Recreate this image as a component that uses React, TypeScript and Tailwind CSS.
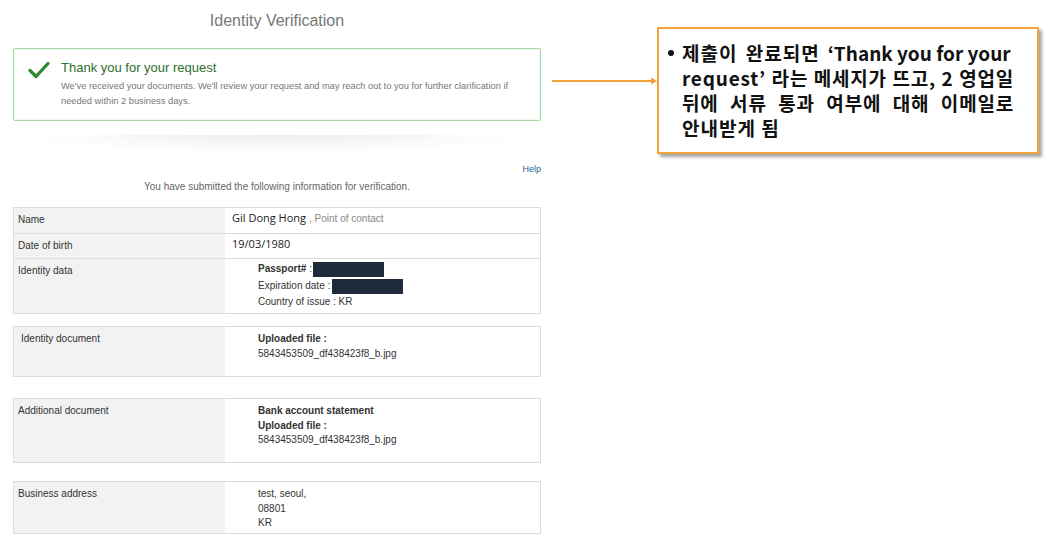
import React from 'react';

// --- Types ---
interface InfoRow {
  label: string;
  labelPad?: string;
  height: string;
  value: React.ReactNode;
}

const sans = "font-['Liberation_Sans',Arial,sans-serif]";

const Redacted: React.FC<{ w: string }> = ({ w }) => (
  <span className={`inline-block h-[15px] align-middle bg-[#1f2a3a] ${w}`} />
);

const InfoTable: React.FC<{ rows: InfoRow[]; className?: string }> = ({ rows, className }) => (
  <div className={`border border-[#dcdcdc] ${className ?? ''}`}>
    {rows.map((row, i) => (
      <div
        key={row.label}
        className={`grid grid-cols-[211px_1fr] ${row.height} ${i > 0 ? 'border-t border-[#dcdcdc]' : ''}`}
      >
        <div className={`bg-[#f2f2f2] ${row.labelPad ?? 'pl-[4px]'} pt-[5px] text-[10px] leading-[14px] text-[#333] ${sans}`}>
          {row.label}
        </div>
        <div className="bg-white">{row.value}</div>
      </div>
    ))}
  </div>
);

const valueText = `text-[10px] leading-[14.5px] text-[#333] ${sans}`;

// 콜아웃 줄: 마지막 줄 빼고 양쪽 정렬
const justifyLine = 'w-[332px] tracking-[0.8px] text-justify [text-align-last:justify]';

export default function App() {
  return (
    <div className={`w-[1051px] h-[554px] bg-white flex overflow-hidden ${sans}`}>
      {/* --- Left: verification page --- */}
      <div className="w-[541px] shrink-0 pl-[13px] flex flex-col">
        <h1 className="mt-[10px] text-center text-[16px] leading-[22px] text-[#777]">Identity Verification</h1>

        <div className="mt-[16px] h-[73px] border border-[#a6dba6] shadow-[inset_0_0_0_1px_#eef8ee] rounded-[2px] flex pl-[14px] pt-[11px]">
          <svg width="22" height="18" viewBox="0 0 22 18" className="mt-[1px] shrink-0">
            <path d="M2 9.5 L8 15.5 L20 2.5" fill="none" stroke="#2a8b2a" strokeWidth="3.2" strokeLinecap="round" strokeLinejoin="round" />
          </svg>
          <div className="ml-[11px]">
            <div className="text-[13px] leading-[16px] text-[#2d6e2d]">Thank you for your request</div>
            <div className="mt-[3px] text-[9.3px] leading-[15px] text-[#777]">
              We've received your documents. We'll review your request and may reach out to you for further clarification if
              <br />
              needed within 2 business days.
            </div>
          </div>
        </div>

        <div className="mt-[14px] mx-[6px] h-[18px] bg-[radial-gradient(ellipse_at_top,rgba(0,0,0,0.07),rgba(0,0,0,0)_70%)]" />

        <div className="mt-[10px] text-right text-[9px] leading-[12px] text-[#2a6496]">Help</div>
        <div className="mt-[5px] text-center text-[10px] leading-[13px] text-[#666]">
          You have submitted the following information for verification.
        </div>

        <InfoTable
          className="mt-[14px]"
          rows={[
            {
              label: 'Name',
              height: 'h-[25px]',
              value: (
                <div className="pl-[7px] pt-[2px] flex items-baseline">
                  <span className="font-['Open_Sans',sans-serif] text-[11px] text-[#222]">Gil Dong Hong</span>
                  <span className="ml-[3px] text-[10px] text-[#888]">, Point of contact</span>
                </div>
              ),
            },
            {
              label: 'Date of birth',
              height: 'h-[25px]',
              value: <div className="pl-[7px] pt-[2px] font-['Open_Sans',sans-serif] text-[11px] text-[#222]">19/03/1980</div>,
            },
            {
              label: 'Identity data',
              height: 'h-[55px]',
              value: (
                <div className={`pl-[33px] pt-[1px] ${valueText}`}>
                  <div className="h-[18px] flex items-center">
                    <span className="font-bold">Passport#</span>
                    <span className="ml-[3px] mr-[1px]">:</span>
                    <Redacted w="w-[71px]" />
                  </div>
                  <div className="h-[17px] flex items-center">
                    <span>Expiration date</span>
                    <span className="ml-[3px] mr-[1px]">:</span>
                    <Redacted w="w-[71px]" />
                  </div>
                  <div>Country of issue : KR</div>
                </div>
              ),
            },
          ]}
        />

        <InfoTable
          className="mt-[12px]"
          rows={[
            {
              label: 'Identity document',
              labelPad: 'pl-[7px]',
              height: 'h-[49px]',
              value: (
                <div className={`pl-[33px] pt-[5px] ${valueText}`}>
                  <div className="font-bold">Uploaded file :</div>
                  <div>5843453509_df438423f8_b.jpg</div>
                </div>
              ),
            },
          ]}
        />

        <InfoTable
          className="mt-[21px]"
          rows={[
            {
              label: 'Additional document',
              height: 'h-[63px]',
              value: (
                <div className={`pl-[33px] pt-[5px] ${valueText}`}>
                  <div className="font-bold">Bank account statement</div>
                  <div className="font-bold">Uploaded file :</div>
                  <div>5843453509_df438423f8_b.jpg</div>
                </div>
              ),
            },
          ]}
        />

        <InfoTable
          className="mt-[18px]"
          rows={[
            {
              label: 'Business address',
              height: 'h-[51px]',
              value: (
                <div className={`pl-[33px] pt-[5px] ${valueText}`}>
                  <div>test, seoul,</div>
                  <div>08801</div>
                  <div>KR</div>
                </div>
              ),
            },
          ]}
        />
      </div>

      {/* --- Arrow --- */}
      <svg width="116" height="10" viewBox="0 0 116 10" className="mt-[76px] shrink-0">
        <line x1="11" y1="5" x2="112" y2="5" stroke="#f2a23a" strokeWidth="2" />
        <path d="M110 1.5 L116 5 L110 8.5 Z" fill="#f2a23a" />
      </svg>

      {/* --- Callout --- */}
      <div className="mt-[27px] w-[382px] h-[127px] shrink-0 border-2 border-[#f2a23a] bg-white shadow-[3px_3px_3px_rgba(0,0,0,0.35)] pl-[9px] pt-[11px]">
        <div className="flex font-['Noto_Sans_CJK_KR','Noto_Sans',sans-serif] font-bold text-[19px] leading-[25px] text-[#111]">
          <span className="w-[14px] h-[25px] shrink-0 flex items-center">
            <span className="w-[6px] h-[6px] rounded-full bg-[#111]" />
          </span>
          <div className="whitespace-nowrap">
            <div className="flex">
              <span className="tracking-[1px] [word-spacing:3px]">제출이 완료되면</span>
              <span className="ml-[8px]">‘Thank you for your</span>
            </div>
            <div className={justifyLine}>request’ 라는 메세지가 뜨고, 2 영업일</div>
            <div className={justifyLine}>뒤에 서류 통과 여부에 대해 이메일로</div>
            <div className="tracking-[1px]">안내받게 됨</div>
          </div>
        </div>
      </div>
    </div>
  );
}
